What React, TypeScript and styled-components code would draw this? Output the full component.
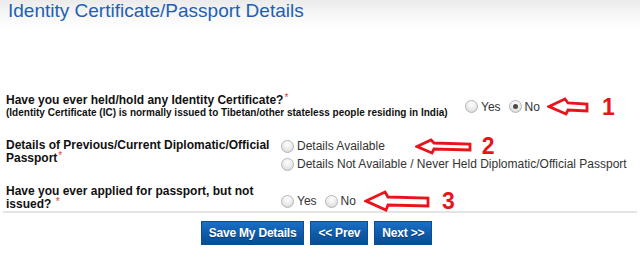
import React, { FC } from 'react';
import styled, { createGlobalStyle } from 'styled-components';

const GlobalStyle = createGlobalStyle`
  html, body {
    margin: 0;
    padding: 0;
    background: #fff;
  }

  body {
    font-family: "Liberation Sans", Arial, sans-serif;
  }
`;

const Page = styled.div`
  width: 640px;
  height: 263px;
  overflow: hidden;
  background: #fff;
`;

const Header = styled.div`
  height: 30px;
  padding: 0 8px;
  background: linear-gradient(to bottom, #ebebeb 0%, #f7f7f7 50%, #ffffff 100%);
`;

const Title = styled.h1`
  margin: 0;
  font-size: 19px;
  font-weight: normal;
  line-height: 22px;
  color: #1f5fb3;
`;

const Form = styled.div`
  padding: 64px 3px 0 3px;
`;

const Row = styled.div<{ $labelWidth: number; $align?: string; $gap?: number }>`
  display: flex;
  align-items: ${({ $align }) => $align || 'center'};
  padding: 0 3px;
  margin-bottom: ${({ $gap }) => $gap || 0}px;

  & > :first-child {
    width: ${({ $labelWidth }) => $labelWidth}px;
    flex-shrink: 0;
  }
`;

const Label = styled.div`
  font-size: 12px;
  font-weight: bold;
  line-height: 13px;
  color: #111;
`;

const Hint = styled.div`
  font-size: 10px;
  font-weight: bold;
  line-height: 12px;
  color: #111;
`;

const Required = styled.span`
  color: #e23b3b;
  font-size: 10px;
  font-weight: normal;
  line-height: 0;
  vertical-align: 3px;
  margin-left: 1px;
`;

const Options = styled.div<{ $column?: boolean; $lift?: number }>`
  display: flex;
  flex-direction: ${({ $column }) => ($column ? 'column' : 'row')};
  gap: ${({ $column }) => ($column ? '4px' : '8px')};
  padding-bottom: ${({ $lift }) => $lift || 0}px;
  white-space: nowrap;
`;

const Option = styled.label`
  display: flex;
  align-items: center;
  height: 14px;
  font-size: 12px;
  line-height: 14px;
  color: #333;
`;

const RadioDot = styled.span<{ $checked?: boolean }>`
  position: relative;
  width: 11px;
  height: 11px;
  margin-right: 3px;
  border: 1px solid #b5b5b5;
  border-radius: 50%;
  background: radial-gradient(circle at 50% 35%, #ffffff 0%, #e8e8e8 55%, #cfcfcf 100%);
  box-shadow: inset 0 1px 1px rgba(255, 255, 255, 0.8);

  &::after {
    content: '';
    display: ${({ $checked }) => ($checked ? 'block' : 'none')};
    position: absolute;
    left: 3px;
    top: 3px;
    width: 5px;
    height: 5px;
    border-radius: 50%;
    background: #4a4a4a;
  }
`;

const Annotation = styled.span<{ $offset: number; $numGap: number }>`
  display: inline-flex;
  align-items: center;
  height: 14px;
  margin-left: ${({ $offset }) => $offset}px;
  gap: ${({ $numGap }) => $numGap}px;
`;

const Number = styled.span`
  font-size: 23px;
  font-weight: bold;
  line-height: 22px;
  color: #e8141b;
`;

const Divider = styled.hr`
  margin: 0;
  border: 0;
  border-top: 2px solid #e4e4e4;
`;

const ButtonBar = styled.div`
  display: flex;
  justify-content: center;
  gap: 6px;
  padding: 8px 0 0 0;
  margin-left: -7px;
`;

const Button = styled.button`
  height: 24px;
  padding: 0 7px;
  border: 1px solid #0b4e94;
  border-radius: 0;
  background: linear-gradient(to bottom, #1a6fc6 0%, #0e5aa8 55%, #0a4c93 100%);
  color: #fff;
  font-family: "Liberation Sans", Arial, sans-serif;
  font-size: 12px;
  font-weight: bold;
  letter-spacing: -0.2px;
  text-shadow: 0 1px 0 rgba(0, 0, 0, 0.35);
`;

const Arrow: FC<{ w: number; h: number }> = ({ w, h }) => {
  const head = Math.round(h * 1.05);
  const st = Math.round(h * 0.3);
  const sb = Math.round(h * 0.72);
  const pts = [
    [2, h / 2],
    [head - 2, 2],
    [head + 1, st],
    [w - 2, st + 1],
    [w - 2, sb],
    [head + 1, sb - 1],
    [head - 1, h - 2],
  ].map((p) => p.join(',')).join(' ');
  return (
    <svg width={w} height={h} viewBox={`0 0 ${w} ${h}`}>
      <polygon points={pts} fill="#fff" stroke="#e8141b" strokeWidth="2.8" strokeLinejoin="miter" />
    </svg>
  );
};

const Radio: FC<{ label: string; checked?: boolean; children?: React.ReactNode }> = ({ label, checked, children }) => (
  <Option>
    <RadioDot $checked={checked} />
    {label}
    {children}
  </Option>
);

export default function App() {
  return (
    <Page>
      <GlobalStyle />
      <Header>
        <Title>Identity Certificate/Passport Details</Title>
      </Header>
      <Form>
        <Row $labelWidth={459} $gap={20}>
          <div>
            <Label>
              Have you ever held/hold any Identity Certificate?
              <Required>*</Required>
            </Label>
            <Hint>(Identity Certificate (IC) is normally issued to Tibetan/other stateless people residing in India)</Hint>
          </div>
          <Options>
            <Radio label="Yes" />
            <Radio label="No" checked>
              <Annotation $offset={7} $numGap={13}>
                <Arrow w={42} h={19} />
                <Number>1</Number>
              </Annotation>
            </Radio>
          </Options>
        </Row>
        <Row $labelWidth={275} $align="flex-start" $gap={14}>
          <Label>
            Details of Previous/Current Diplomatic/Official Passport
            <Required>*</Required>
          </Label>
          <Options $column>
            <Radio label="Details Available">
              <Annotation $offset={30} $numGap={10}>
                <Arrow w={57} h={17} />
                <Number>2</Number>
              </Annotation>
            </Radio>
            <Radio label="Details Not Available / Never Held Diplomatic/Official Passport" />
          </Options>
        </Row>
        <Row $labelWidth={275} $align="flex-end">
          <Label>
            Have you ever applied for passport, but not issued?
            {' '}
            <Required>*</Required>
          </Label>
          <Options $lift={3}>
            <Radio label="Yes" />
            <Radio label="No">
              <Annotation $offset={8} $numGap={12}>
                <Arrow w={66} h={22} />
                <Number>3</Number>
              </Annotation>
            </Radio>
          </Options>
        </Row>
        <Divider />
      </Form>
      <ButtonBar>
        <Button>Save My Details</Button>
        <Button>&lt;&lt; Prev</Button>
        <Button>Next &gt;&gt;</Button>
      </ButtonBar>
    </Page>
  );
}
